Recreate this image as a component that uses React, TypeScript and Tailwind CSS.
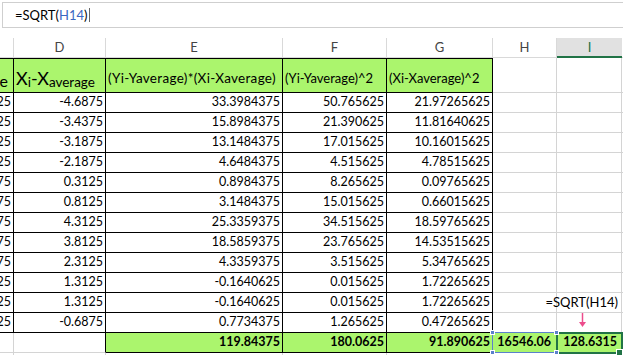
import React from 'react';

type Row = { c: string; d: string; e: string; f: string; g: string };

const rows: Row[] = [
  { c: '-7.125', d: '-4.6875', e: '33.3984375', f: '50.765625', g: '21.97265625' },
  { c: '-4.625', d: '-3.4375', e: '15.8984375', f: '21.390625', g: '11.81640625' },
  { c: '-4.125', d: '-3.1875', e: '13.1484375', f: '17.015625', g: '10.16015625' },
  { c: '-2.125', d: '-2.1875', e: '4.6484375', f: '4.515625', g: '4.78515625' },
  { c: '2.875', d: '0.3125', e: '0.8984375', f: '8.265625', g: '0.09765625' },
  { c: '3.875', d: '0.8125', e: '3.1484375', f: '15.015625', g: '0.66015625' },
  { c: '5.875', d: '4.3125', e: '25.3359375', f: '34.515625', g: '18.59765625' },
  { c: '4.875', d: '3.8125', e: '18.5859375', f: '23.765625', g: '14.53515625' },
  { c: '1.875', d: '2.3125', e: '4.3359375', f: '3.515625', g: '5.34765625' },
  { c: '-0.125', d: '1.3125', e: '-0.1640625', f: '0.015625', g: '1.72265625' },
  { c: '-0.125', d: '1.3125', e: '-0.1640625', f: '0.015625', g: '1.72265625' },
  { c: '-1.125', d: '-0.6875', e: '0.7734375', f: '1.265625', g: '0.47265625' },
];

const blk = 'border-r border-b border-black';
const grd = 'border-r border-b border-[#d4d4d4]';
const lime = 'bg-[#abf56d]';

function Cell({ w, line, className = '', children }: { w: string; line: string; className?: string; children?: React.ReactNode }) {
  return (
    <div className={`${w} shrink-0 flex items-center justify-end pr-[2px] overflow-hidden whitespace-nowrap ${line} ${className}`}>
      {children}
    </div>
  );
}

function ColHead({ w, label }: { w: string; label: string }) {
  return (
    <div className={`${w} shrink-0 flex items-center justify-center border-r border-b border-[#d9d9d9] text-[#444]`}>
      {label}
    </div>
  );
}

function Arrow() {
  return (
    <svg className="absolute left-[21px] top-0" width="9" height="15" viewBox="0 0 9 15">
      <line x1="4.5" y1="0" x2="4.5" y2="10" stroke="#ec4c8c" strokeWidth="1.5" />
      <path d="M1 9 L8 9 L4.5 14 Z" fill="#ec4c8c" />
    </svg>
  );
}

export default function App() {
  return (
    <div className="w-[623px] h-[355px] overflow-hidden bg-white font-['Lato',sans-serif] text-black">
      {/* formula bar */}
      <div className="h-[38px] pt-[2px] pl-[2px]">
        <div className="h-[26px] border-t border-b border-l border-[#cfcfcf] flex items-center pl-[12px] text-[13px] leading-none">
          <span>=SQRT(</span>
          <span className="text-[#3a67c2]">H14</span>
          <span>)</span>
          <span className="ml-[1px] w-px h-[14px] bg-[#666]" />
        </div>
      </div>

      {/* column letters */}
      <div className="flex h-[20px] text-[13px] leading-none">
        <ColHead w="w-[14px]" label="" />
        <ColHead w="w-[92px]" label="D" />
        <ColHead w="w-[177px]" label="E" />
        <ColHead w="w-[104px]" label="F" />
        <ColHead w="w-[106px]" label="G" />
        <ColHead w="w-[64px]" label="H" />
        <div className="w-[65px] shrink-0 flex items-center justify-center bg-[#e1e1e1] border-b-2 border-[#217346] text-[#217346]">
          I
        </div>
        <div className="flex-1 border-b border-[#d9d9d9]" />
      </div>

      {/* header row */}
      <div className="flex h-[35px] leading-none">
        <div className={`w-[14px] shrink-0 flex items-end justify-end pr-[5px] pb-[5px] overflow-hidden whitespace-nowrap border-t ${blk} ${lime} text-[18px]`}>
          <span>Y</span>
          <span className="text-[16px] relative top-[2px]">i</span>
          <span>-Y</span>
          <span className="text-[16px] relative top-[2px]">average</span>
        </div>
        <div className={`w-[92px] shrink-0 flex items-end pl-[2px] pb-[5px] overflow-hidden whitespace-nowrap border-t ${blk} ${lime} text-[18px]`}>
          <span>X</span>
          <span className="text-[13.5px] relative top-[2px]">i</span>
          <span>-X</span>
          <span className="text-[13.5px] relative top-[2px]">average</span>
        </div>
        <div className={`w-[177px] shrink-0 flex items-end pl-[2px] pb-[7px] overflow-hidden whitespace-nowrap border-t ${blk} ${lime} text-[13.5px] tracking-[0.3px]`}>
          (Yi-Yaverage)*(Xi-Xaverage)
        </div>
        <div className={`w-[104px] shrink-0 flex items-end pl-[2px] pb-[7px] overflow-hidden whitespace-nowrap border-t ${blk} ${lime} text-[13px]`}>
          (Yi-Yaverage)^2
        </div>
        <div className={`w-[106px] shrink-0 flex items-end pl-[2px] pb-[7px] overflow-hidden whitespace-nowrap border-t ${blk} ${lime} text-[13px]`}>
          (Xi-Xaverage)^2
        </div>
        <div className={`w-[64px] shrink-0 ${grd}`} />
        <div className={`w-[65px] shrink-0 ${grd}`} />
        <div className="flex-1 border-b border-[#d4d4d4]" />
      </div>

      {/* data rows */}
      {rows.map((r, idx) => (
        <div key={idx} className="flex h-[20px] text-[12.5px] leading-none">
          <Cell w="w-[14px]" line={blk}>{r.c}</Cell>
          <Cell w="w-[92px]" line={blk}>{r.d}</Cell>
          <Cell w="w-[177px]" line={blk}>{r.e}</Cell>
          <Cell w="w-[104px]" line={blk}>{r.f}</Cell>
          <Cell w="w-[106px]" line={blk}>{r.g}</Cell>
          <Cell w="w-[64px]" line={grd} />
          {idx === 10 ? (
            <div className={`w-[65px] shrink-0 flex items-center justify-end pr-[3px] whitespace-nowrap text-[13px] ${grd}`}>
              <span>=SQRT(H14)</span>
            </div>
          ) : idx === 11 ? (
            <div className={`w-[65px] shrink-0 relative ${grd}`}>
              <Arrow />
            </div>
          ) : (
            <Cell w="w-[65px]" line={grd} />
          )}
          <div className="flex-1 border-b border-[#d4d4d4]" />
        </div>
      ))}

      {/* totals */}
      <div className="flex h-[20px] text-[12.5px] leading-none font-bold">
        <Cell w="w-[14px]" line={grd} />
        <Cell w="w-[92px]" line="border-r border-b border-r-black border-b-[#d4d4d4]" />
        <Cell w="w-[177px]" line={blk} className={lime}>119.84375</Cell>
        <Cell w="w-[104px]" line={blk} className={lime}>180.0625</Cell>
        <Cell w="w-[106px]" line={blk} className={lime}>91.890625</Cell>
        <div className={`w-[64px] shrink-0 relative flex items-center justify-end pr-[5px] whitespace-nowrap ${grd} ${lime}`}>
          16546.06
          <div className="absolute -left-px -top-px w-[65px] h-[21px] border border-[#5a80cc] z-10" />
          <div className="absolute -left-[3px] -top-[3px] w-[5px] h-[5px] bg-[#5a80cc] border border-white z-20" />
          <div className="absolute -left-[3px] top-[17px] w-[5px] h-[5px] bg-[#5a80cc] border border-white z-20" />
          <div className="absolute left-[61px] -top-[3px] w-[5px] h-[5px] bg-[#5a80cc] border border-white z-30" />
          <div className="absolute left-[61px] top-[17px] w-[5px] h-[5px] bg-[#5a80cc] border border-white z-30" />
        </div>
        <div className={`w-[65px] shrink-0 relative flex items-center justify-end pr-[4px] whitespace-nowrap ${grd} ${lime}`}>
          128.6315
          <div className="absolute -left-px -top-px w-[67px] h-[22px] border-2 border-[#217346] z-20" />
          <div className="absolute left-[59px] top-[16px] w-[7px] h-[7px] bg-[#217346] border border-white z-20" />
        </div>
        <div className="flex-1 border-b border-[#d4d4d4]" />
      </div>

      {/* next empty row */}
      <div className="flex h-[20px]">
        <div className={`w-[14px] shrink-0 ${grd}`} />
        <div className={`w-[92px] shrink-0 ${grd}`} />
        <div className={`w-[177px] shrink-0 ${grd}`} />
        <div className={`w-[104px] shrink-0 ${grd}`} />
        <div className={`w-[106px] shrink-0 ${grd}`} />
        <div className={`w-[64px] shrink-0 ${grd}`} />
        <div className={`w-[65px] shrink-0 ${grd}`} />
        <div className="flex-1 border-b border-[#d4d4d4]" />
      </div>
    </div>
  );
}
